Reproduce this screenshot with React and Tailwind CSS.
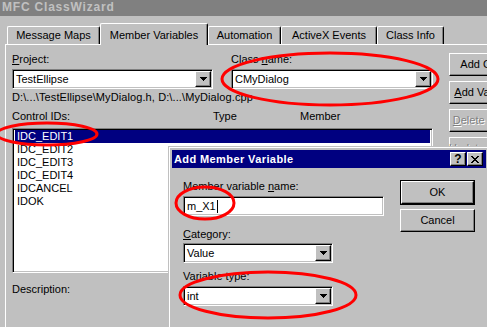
import React from "react";

const raised =
  "border border-t-white border-l-white border-r-black border-b-black shadow-[inset_-1px_-1px_0_#808080]";
const sunken =
  "border border-t-[#808080] border-l-[#808080] border-b-white border-r-white shadow-[inset_1px_1px_0_#000,inset_-1px_-1px_0_#c0c0c0]";

function Arrow() {
  return (
    <svg width="7" height="4" viewBox="0 0 7 4" shapeRendering="crispEdges">
      <polygon points="0,0 7,0 3.5,4" fill="#000" />
    </svg>
  );
}

function Combo({ width, text }) {
  return (
    <div className={`${sunken} bg-white h-[20px] flex items-center`} style={{ width }}>
      <div className="flex-1 pl-[3px] leading-[16px] whitespace-nowrap overflow-hidden">{text}</div>
      <div className={`${raised} bg-[#c0c0c0] w-[16px] h-[16px] mr-[1px] flex items-center justify-center`}>
        <Arrow />
      </div>
    </div>
  );
}

function Tab({ width, active, children }) {
  return (
    <div
      className={
        active
          ? "relative z-10 h-[22px] -mb-[1px] bg-[#c0c0c0] border-l border-t border-r border-l-white border-t-white border-r-black rounded-t-[2px] shadow-[inset_-1px_0_0_#808080] flex items-start justify-center pt-[5px]"
          : "h-[18px] bg-[#c0c0c0] border-l border-t border-r border-l-white border-t-white border-r-black rounded-t-[2px] shadow-[inset_-1px_0_0_#808080] flex items-start justify-center pt-[2px]"
      }
      style={{ width }}
    >
      <span className="leading-[13px] whitespace-nowrap">{children}</span>
    </div>
  );
}

function Btn({ children, disabled, className = "" }) {
  return (
    <div
      className={`${raised} bg-[#c0c0c0] h-[23px] flex items-center justify-center whitespace-nowrap ${
        disabled ? "text-[#808080] [text-shadow:1px_1px_0_#fff]" : ""
      } ${className}`}
    >
      {children}
    </div>
  );
}

export default function App() {
  const items = ["IDC_EDIT1", "IDC_EDIT2", "IDC_EDIT3", "IDC_EDIT4", "IDCANCEL", "IDOK"];
  return (
    <div
      className="relative w-[487px] h-[327px] overflow-hidden bg-[#c0c0c0] text-[11px] text-black"
      style={{ fontFamily: '"Liberation Sans", Arial, sans-serif' }}
    >
      {/* main title bar */}
      <div className="h-[16px] bg-[#808080] text-[#c0c0c0] font-bold pl-[2px] leading-[15px] text-[12px] tracking-[0.8px]">
        MFC ClassWizard
      </div>

      <div className="pl-[5px] pt-[7px]">
        {/* tabs */}
        <div className="flex items-end h-[21px] pl-[2px]">
          <Tab width={93}>Message Maps</Tab>
          <Tab width={108} active>Member Variables</Tab>
          <Tab width={73}>Automation</Tab>
          <Tab width={96}>ActiveX Events</Tab>
          <Tab width={67}>Class Info</Tab>
        </div>

        {/* panel */}
        <div className="border-l border-t border-white h-[300px] flex pl-[6px] pt-[8px]">
          <div className="w-[422px] flex flex-col">
            <div className="flex gap-[18px]">
              <div className="flex flex-col">
                <div className="leading-[13px]">
                  <span className="underline">P</span>roject:
                </div>
                <div className="mt-[3px]">
                  <Combo width={201} text="TestEllipse" />
                </div>
              </div>
              <div className="flex flex-col">
                <div className="leading-[13px]">
                  Class <span className="underline">n</span>ame:
                </div>
                <div className="mt-[3px]">
                  <Combo width={202} text="CMyDialog" />
                </div>
              </div>
            </div>
            <div className="mt-[2px] leading-[13px] whitespace-nowrap tracking-[0.1px]">
              D:\...\TestEllipse\MyDialog.h, D:\...\MyDialog.cpp
            </div>
            <div className="mt-[6px] leading-[13px] flex">
              <span className="w-[201px]">Control IDs:</span>
              <span className="w-[87px]">Type</span>
              <span>Member</span>
            </div>
            <div className={`${sunken} mt-[5px] h-[145px] bg-white pt-[1px] px-[2px]`}>
              {items.map((it, i) => (
                <div
                  key={it}
                  className={`h-[13px] leading-[13px] pl-[2px] ${
                    i === 0 ? "bg-[#000080] text-white" : ""
                  }`}
                >
                  {it}
                </div>
              ))}
            </div>
            <div className="mt-[10px] leading-[13px]">Description:</div>
          </div>

          <div className="ml-[16px] pt-[0px] flex flex-col gap-[5px] w-[82px] shrink-0">
            <Btn>Add Class...</Btn>
            <Btn>
              <span>
                <span className="underline">A</span>dd Variable...
              </span>
            </Btn>
            <Btn disabled>
              <span>
                <span className="underline">D</span>elete Variable
              </span>
            </Btn>
            <Btn disabled>Update Columns</Btn>
          </div>
        </div>
      </div>

      {/* Add Member Variable dialog */}
      <div className="absolute left-[168px] top-[146px] w-[322px] h-[200px] bg-[#c0c0c0] border border-t-[#c0c0c0] border-l-[#c0c0c0] border-r-black border-b-black shadow-[inset_1px_1px_0_#fff,inset_-1px_-1px_0_#808080] p-[3px]">
        <div className="h-[18px] bg-[#000080] flex items-center pl-[2px] pr-[3px]">
          <span className="flex-1 text-white font-bold text-[11px] tracking-[0.4px] leading-[18px]">
            Add Member Variable
          </span>
          <div className={`${raised} bg-[#c0c0c0] w-[16px] h-[14px] flex items-center justify-center font-bold text-[12px] leading-[12px]`}>
            ?
          </div>
          <div className={`${raised} ml-[1px] bg-[#c0c0c0] w-[16px] h-[14px] flex items-center justify-center`}>
            <svg width="8" height="7" viewBox="0 0 8 7" shapeRendering="crispEdges">
              <path d="M0 0h2v1H0zM6 0h2v1H6zM1 1h2v1H1zM5 1h2v1H5zM2 2h4v1H2zM3 3h2v1H3zM2 4h4v1H2zM1 5h2v1H1zM5 5h2v1H5zM0 6h2v1H0zM6 6h2v1H6z" fill="#000" />
            </svg>
          </div>
        </div>

        <div className="flex pl-[11px] pt-[12px]">
          <div className="w-[201px] flex flex-col">
            <div className="leading-[13px]">
              Member variable <span className="underline">n</span>ame:
            </div>
            <div className={`${sunken} mt-[3px] h-[20px] bg-white flex items-center pl-[3px]`}>
              <span className="leading-[14px]">m_X1</span>
              <span className="inline-block w-[1px] h-[13px] bg-black ml-[1px]" />
            </div>
            <div className="mt-[12px] leading-[13px]">
              <span className="underline">C</span>ategory:
            </div>
            <div className="mt-[2px]">
              <Combo width={150} text="Value" />
            </div>
            <div className="mt-[7px] leading-[13px]">Variable type:</div>
            <div className="mt-[3px]">
              <Combo width={150} text="int" />
            </div>
          </div>
          <div className="ml-[16px] flex flex-col">
            <div className="border border-black">
              <Btn className="w-[73px] h-[22px]">OK</Btn>
            </div>
            <Btn className="mt-[4px] w-[75px]">Cancel</Btn>
          </div>
        </div>
      </div>

      {/* red annotation ellipses */}
      <svg
        className="absolute inset-0 pointer-events-none"
        width="487"
        height="327"
        viewBox="0 0 487 327"
      >
        <g fill="none" stroke="#ff0000" strokeWidth="3">
          <ellipse cx="330" cy="79" rx="108" ry="26" />
          <ellipse cx="47" cy="134" rx="50" ry="11" />
          <ellipse cx="205" cy="203" rx="29" ry="16" />
          <ellipse cx="268" cy="295" rx="88" ry="23" />
        </g>
      </svg>
    </div>
  );
}
